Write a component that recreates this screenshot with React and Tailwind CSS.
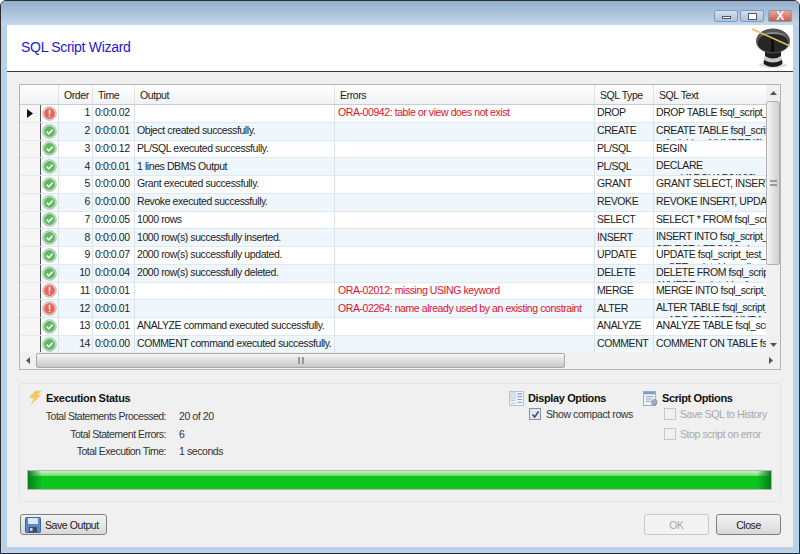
import React from 'react';

const rows = [
    { n: 1, time: '0:0:0.02', err: 'ORA-00942: table or view does not exist', type: 'DROP', sql: 'DROP TABLE fsql_script_test' },
    { n: 2, time: '0:0:0.01', out: 'Object created successfully.', type: 'CREATE', sql: 'CREATE TABLE fsql_script_test', sql2: '    fsql_id      NUMBER(6),' },
    { n: 3, time: '0:0:0.12', out: 'PL/SQL executed successfully.', type: 'PL/SQL', sql: 'BEGIN', sql2: '     FOR i IN 1..1000 LOOP' },
    { n: 4, time: '0:0:0.01', out: '1 lines DBMS Output', type: 'PL/SQL', sql: 'DECLARE', sql2: '          VARCHAR2(100);' },
    { n: 5, time: '0:0:0.00', out: 'Grant executed successfully.', type: 'GRANT', sql: 'GRANT SELECT, INSERT ON fsql' },
    { n: 6, time: '0:0:0.00', out: 'Revoke executed successfully.', type: 'REVOKE', sql: 'REVOKE INSERT, UPDATE ON fsql' },
    { n: 7, time: '0:0:0.05', out: '1000 rows', type: 'SELECT', sql: 'SELECT * FROM fsql_script_test' },
    { n: 8, time: '0:0:0.00', out: '1000 row(s) successfully inserted.', type: 'INSERT', sql: 'INSERT INTO fsql_script_test', sql2: 'SELECT * FROM fsql_script' },
    { n: 9, time: '0:0:0.07', out: '2000 row(s) successfully updated.', type: 'UPDATE', sql: 'UPDATE fsql_script_test_table', sql2: '     SET script_id = null' },
    { n: 10, time: '0:0:0.04', out: '2000 row(s) successfully deleted.', type: 'DELETE', sql: 'DELETE FROM fsql_script_test', sql2: ' WHERE script_id > 1' },
    { n: 11, time: '0:0:0.01', err: 'ORA-02012: missing USING keyword', type: 'MERGE', sql: 'MERGE INTO fsql_script_test', sql2: '     ON script_id = null' },
    { n: 12, time: '0:0:0.01', err: 'ORA-02264: name already used by an existing constraint', type: 'ALTER', sql: 'ALTER TABLE fsql_script_test', sql2: '     ADD CONSTRAINT f' },
    { n: 13, time: '0:0:0.01', out: 'ANALYZE command executed successfully.', type: 'ANALYZE', sql: 'ANALYZE TABLE fsql_script_test' },
    { n: 14, time: '0:0:0.00', out: 'COMMENT command executed successfully.', type: 'COMMENT', sql: 'COMMENT ON TABLE fsql_script' },
];

const StatusIcon = ({ bad }) => (
    <svg width="15" height="15" viewBox="0 0 15 15">
        <circle cx="7.5" cy="7.5" r="6.8" fill={bad ? '#ead2cc' : '#cfe3cf'} stroke={bad ? '#bfa6a0' : '#98b498'} strokeWidth="0.8" />
        <circle cx="7.5" cy="7.5" r="5.4" fill={bad ? '#e3695c' : '#5dba5f'} />
        {bad ? (
            <>
                <rect x="6.7" y="3.4" width="1.6" height="5.2" rx="0.7" fill="#fbeeea" />
                <rect x="6.7" y="9.6" width="1.6" height="1.8" rx="0.8" fill="#fbeeea" />
            </>
        ) : (
            <path d="M4.6 7.6 L6.8 9.8 L10.6 5.6" fill="none" stroke="#f2f8f0" strokeWidth="1.6" />
        )}
    </svg>
);

const Logo = () => (
    <svg width="42" height="42" viewBox="0 0 42 42">
        <ellipse cx="24" cy="38" rx="14" ry="3" fill="#bbb" opacity="0.5" />
        <path d="M16 24 L16 31 Q13 36 16 38 Q24 42 32 38 Q35 36 32 31 L32 24 Z" fill="#1c1c1c" />
        <path d="M16 29 Q24 34 32 29 L33 33 Q24 38 15 33 Z" fill="#c8c8c8" />
        <ellipse cx="24" cy="14" rx="17" ry="12.5" fill="#555" />
        <ellipse cx="24" cy="16" rx="15" ry="9.5" fill="#262626" />
        <path d="M10 9 Q24 1 38 9 Q24 5 10 9 Z" fill="#8a8a8a" />
        <rect x="22" y="11" width="3" height="14" fill="#0e0e0e" />
        <path d="M3 2 L41 19" stroke="#d9c06a" strokeWidth="1.6" />
    </svg>
);

const Floppy = () => (
    <svg width="16" height="16" viewBox="0 0 16 16">
        <rect x="0.5" y="0.5" width="15" height="15" rx="1" fill="#5a88c8" stroke="#3a639f" />
        <rect x="3" y="1" width="10" height="6" fill="#dbe8f7" />
        <rect x="4" y="10" width="8" height="5" fill="#3a4a60" />
        <rect x="5" y="11" width="2.5" height="3" fill="#c7d3e2" />
    </svg>
);

const Bolt = () => (
    <svg width="16" height="16" viewBox="0 0 16 16">
        <path d="M8 1 L15 1 L10 5 L14 5 L4 15 L7 8 L2 8 Z" fill="#f3c65c" stroke="#eadcb4" strokeWidth="0.6" />
    </svg>
);

const DisplayIcon = () => (
    <svg width="15" height="15" viewBox="0 0 16 16">
        <rect x="0.5" y="0.5" width="15" height="15" fill="#f2f5fa" stroke="#b0c0d6" />
        <rect x="2" y="2" width="5" height="6" fill="#d6e2f2" stroke="#a8b8cf" strokeWidth="0.5" />
        <path d="M9 3 H14 M9 6 H14 M9 9 H14 M9 12 H14" stroke="#7f9fcc" strokeWidth="1.2" />
        <path d="M2 10 H7 M2 13 H7" stroke="#b3c4da" strokeWidth="1.2" />
    </svg>
);

const ScriptIcon = () => (
    <svg width="15" height="15" viewBox="0 0 16 16">
        <rect x="0.5" y="0.5" width="13" height="15" fill="#eef3fa" stroke="#8fa9cc" />
        <rect x="1" y="1" width="12" height="2.5" fill="#7f9cc4" />
        <path d="M3 6 H11 M3 8.5 H9 M3 11 H8" stroke="#8a9ab0" strokeWidth="1" />
        <circle cx="12" cy="12" r="3" fill="#a4aeb9" stroke="#7a848f" strokeWidth="0.7" />
    </svg>
);

const CaptionButton = ({ red, children }) => (
    <div className={`w-[24px] h-[12px] border border-[#7f9abb] rounded-[2px] flex items-center justify-center ${red ? 'bg-gradient-to-b from-[#e6a492] to-[#c8604e]' : 'bg-gradient-to-b from-[#d3e1ee] to-[#a9c2dc]'}`}>
        {children}
    </div>
);

const Check = ({ checked, disabled }) => (
    <div className={`w-[12px] h-[12px] border flex items-center justify-center ${disabled ? 'border-[#c8c8c8] bg-[#f0f0f0]' : 'border-[#8e8f8f] bg-[#dfe8f4]'}`}>
        {checked && (
            <svg width="9" height="9" viewBox="0 0 9 9">
                <path d="M1.5 4.5 L3.7 7 L7.5 1.5" fill="none" stroke="#3c4a70" strokeWidth="1.6" />
            </svg>
        )}
    </div>
);

const App = () => {
    const cols = 'grid grid-cols-[21px_18px_34px_42px_200px_260px_59px_113px]';

    return (
        <div className="w-[800px] h-[554px] overflow-hidden flex flex-col bg-[#b9d2ea] border border-[#2c2c2c] rounded-t-[6px] font-['Liberation_Sans',sans-serif] text-[10.5px] leading-[14px] tracking-[-0.42px] text-[#222]">
            {/* Title bar */}
            <div className="h-[24px] shrink-0 bg-gradient-to-b from-[#93aecd] to-[#c4d7ea] flex justify-end items-start pt-[9px] pr-[7px]">
                <CaptionButton><div className="w-[9px] h-[3px] mt-[3px] bg-white border border-[#556]" /></CaptionButton>
                <div className="w-[2px]" />
                <CaptionButton><div className="w-[9px] h-[7px] border border-[#556] bg-white" /></CaptionButton>
                <div className="w-[4px]" />
                <CaptionButton red><span className="text-white font-bold text-[12px] leading-none">X</span></CaptionButton>
            </div>

            <div className="flex-1 mx-[6px] flex flex-col bg-[#f0f0f0]">
                {/* Header */}
                <div className="h-[47px] shrink-0 bg-white border-b border-[#3a3a3a] flex items-center justify-between pl-[14px] pr-[2px]">
                    <span className="text-[14px] leading-[18px] tracking-[-0.3px] text-[#1a1ad0] -mt-[2px]">SQL Script Wizard</span>
                    <Logo />
                </div>

                {/* Results grid */}
                <div className="mt-[12px] mx-[12px] h-[286px] shrink-0 border border-[#b4b4b4] bg-[#f0f0f0] relative overflow-hidden">
                    <div className={`${cols} h-[20px] bg-gradient-to-b from-white to-[#f1f2f4] border-b border-[#c8ccd2]`}>
                        {['', '', 'Order', 'Time', 'Output', 'Errors', 'SQL Type', 'SQL Text'].map((h, i) => (
                            <div key={i} className={`flex items-center pl-[5px] pt-[1px] ${i > 0 ? 'border-r border-[#dfe3e8]' : ''}`}>{h}</div>
                        ))}
                    </div>
                    {rows.map((r, i) => (
                        <div key={r.n} className={`${cols} h-[17.75px] ${i % 2 ? 'bg-[#eff7fd]' : 'bg-white'} border-b border-[#e0e9f0]`}>
                            <div className="bg-[#f6f6f6] border-r border-[#555] flex items-center justify-center">
                                {i === 0 && <svg width="6" height="9" viewBox="0 0 6 9"><path d="M0 0 L6 4.5 L0 9 Z" fill="#111" /></svg>}
                            </div>
                            <div className="border-r border-[#dbe3ea] flex items-center justify-center"><StatusIcon bad={!!r.err} /></div>
                            <div className="border-r border-[#dbe3ea] flex items-center justify-end pr-[2px] pb-[2px]">{r.n}</div>
                            <div className="border-r border-[#dbe3ea] flex items-center pl-[2px] pb-[2px]">{r.time}</div>
                            <div className="border-r border-[#dbe3ea] flex items-center pl-[2px] pb-[2px] whitespace-nowrap overflow-hidden">{r.out}</div>
                            <div className="border-r border-[#dbe3ea] flex items-center pl-[3px] pb-[2px] whitespace-nowrap overflow-hidden text-[#e0102a]">{r.err}</div>
                            <div className="border-r border-[#dbe3ea] flex items-center pl-[2px] pb-[2px]">{r.type}</div>
                            <div className="pl-[2px] pt-[1px] overflow-hidden whitespace-pre leading-[13px]">
                                <div>{r.sql}</div>
                                {r.sql2 && <div>{r.sql2}</div>}
                            </div>
                        </div>
                    ))}

                    {/* Vertical scrollbar */}
                    <div className="absolute right-0 top-0 w-[14px] h-[268px] bg-[#f0f0f0] flex flex-col items-center">
                        <div className="h-[16px] flex items-center"><svg width="7" height="4" viewBox="0 0 7 4"><path d="M3.5 0 L7 4 L0 4 Z" fill="#555" /></svg></div>
                        <div className="w-full h-[164px] bg-gradient-to-r from-[#f6f6f6] to-[#cfcfcf] border border-[#b0b0b0] rounded-[2px] flex items-center justify-center">
                            <div className="w-[7px] h-[6px] border-y-[2px] border-[#999]" />
                        </div>
                        <div className="mt-auto h-[17px] flex items-center"><svg width="7" height="4" viewBox="0 0 7 4"><path d="M3.5 4 L7 0 L0 0 Z" fill="#555" /></svg></div>
                    </div>

                    {/* Horizontal scrollbar */}
                    <div className="absolute left-0 right-0 bottom-0 h-[17px] bg-[#f0f0f0] flex items-center">
                        <div className="w-[16px] flex justify-center"><svg width="4" height="7" viewBox="0 0 4 7"><path d="M0 3.5 L4 0 L4 7 Z" fill="#555" /></svg></div>
                        <div className="w-[529px] h-[15px] bg-gradient-to-b from-[#f6f6f6] to-[#c8c8c8] border border-[#a8a8a8] rounded-[2px] flex items-center justify-center">
                            <div className="w-[6px] h-[7px] border-x-[2px] border-[#999]" />
                        </div>
                        <div className="ml-auto w-[18px] flex justify-center"><svg width="4" height="7" viewBox="0 0 4 7"><path d="M4 3.5 L0 0 L0 7 Z" fill="#555" /></svg></div>
                    </div>
                </div>

                {/* Execution status */}
                <div className="mt-[13px] mx-[12px] h-[119px] shrink-0 border border-[#e3e3e3] rounded-[2px] pl-[7px] pr-[8px] pt-[6px] flex flex-col">
                    <div className="flex h-[79px]">
                        <div className="flex-1">
                            <div className="flex items-center gap-[3px] h-[16px]">
                                <Bolt />
                                <span className="font-bold text-[11px] tracking-[-0.3px] text-[#111]">Execution Status</span>
                            </div>
                            <div className="grid grid-cols-[139px_auto] justify-start gap-x-[13px] mt-[2px] leading-[17.6px] text-[#333]">
                                <div className="text-right tracking-[-0.5px]">Total Statements Processed:</div><div>20 of 20</div>
                                <div className="text-right tracking-[-0.5px]">Total Statement Errors:</div><div>6</div>
                                <div className="text-right tracking-[-0.5px]">Total Execution Time:</div><div>1 seconds</div>
                            </div>
                        </div>
                        <div className="w-[134px]">
                            <div className="flex items-center gap-[4px] h-[16px]">
                                <DisplayIcon />
                                <span className="font-bold text-[11px] tracking-[-0.38px] text-[#111]">Display Options</span>
                            </div>
                            <div className="flex items-center gap-[5px] ml-[20px] mt-[1px] text-[#333] whitespace-nowrap">
                                <Check checked />
                                <span>Show compact rows</span>
                            </div>
                        </div>
                        <div className="w-[129px]">
                            <div className="flex items-center gap-[4px] h-[16px]">
                                <ScriptIcon />
                                <span className="font-bold text-[11px] tracking-[-0.38px] text-[#111]">Script Options</span>
                            </div>
                            <div className="flex items-center gap-[4px] ml-[21px] mt-[1px] text-[#a8a8a8] whitespace-nowrap">
                                <Check disabled />
                                <span>Save SQL to History</span>
                            </div>
                            <div className="flex items-center gap-[4px] ml-[21px] mt-[6px] text-[#a8a8a8] whitespace-nowrap">
                                <Check disabled />
                                <span>Stop script on error</span>
                            </div>
                        </div>
                    </div>
                    {/* Progress bar */}
                    <div className="h-[20px] mt-[1px] border border-[#b4b4b4] bg-[#0cc51f] relative overflow-hidden">
                        <div className="h-[5px] bg-gradient-to-b from-[#c8f5c4] to-[#5fe06a]" />
                        <div className="absolute left-0 top-0 bottom-0 w-[14px] bg-gradient-to-r from-[#0a7a1a] to-transparent" />
                        <div className="absolute right-0 top-0 bottom-0 w-[14px] bg-gradient-to-l from-[#0a7a1a] to-transparent" />
                    </div>
                </div>

                {/* Footer buttons */}
                <div className="mt-[12px] ml-[13px] mr-[12px] flex items-start">
                    <button className="w-[87px] h-[21px] border border-[#808080] rounded-[3px] bg-gradient-to-b from-[#f4f4f4] to-[#d8d8d8] flex items-center gap-[4px] pl-[4px] text-[#222]">
                        <Floppy />
                        <span>Save Output</span>
                    </button>
                    <button className="ml-auto w-[65px] h-[21px] border border-[#c8c8c8] rounded-[3px] bg-[#f2f2f2] text-[#a8a8a8]">OK</button>
                    <button className="ml-[7px] w-[65px] h-[21px] border border-[#808080] rounded-[3px] bg-gradient-to-b from-[#f4f4f4] to-[#d8d8d8] text-[#222]">Close</button>
                </div>
            </div>
            <div className="h-[6px] shrink-0" />
        </div>
    );
};

export default App;
